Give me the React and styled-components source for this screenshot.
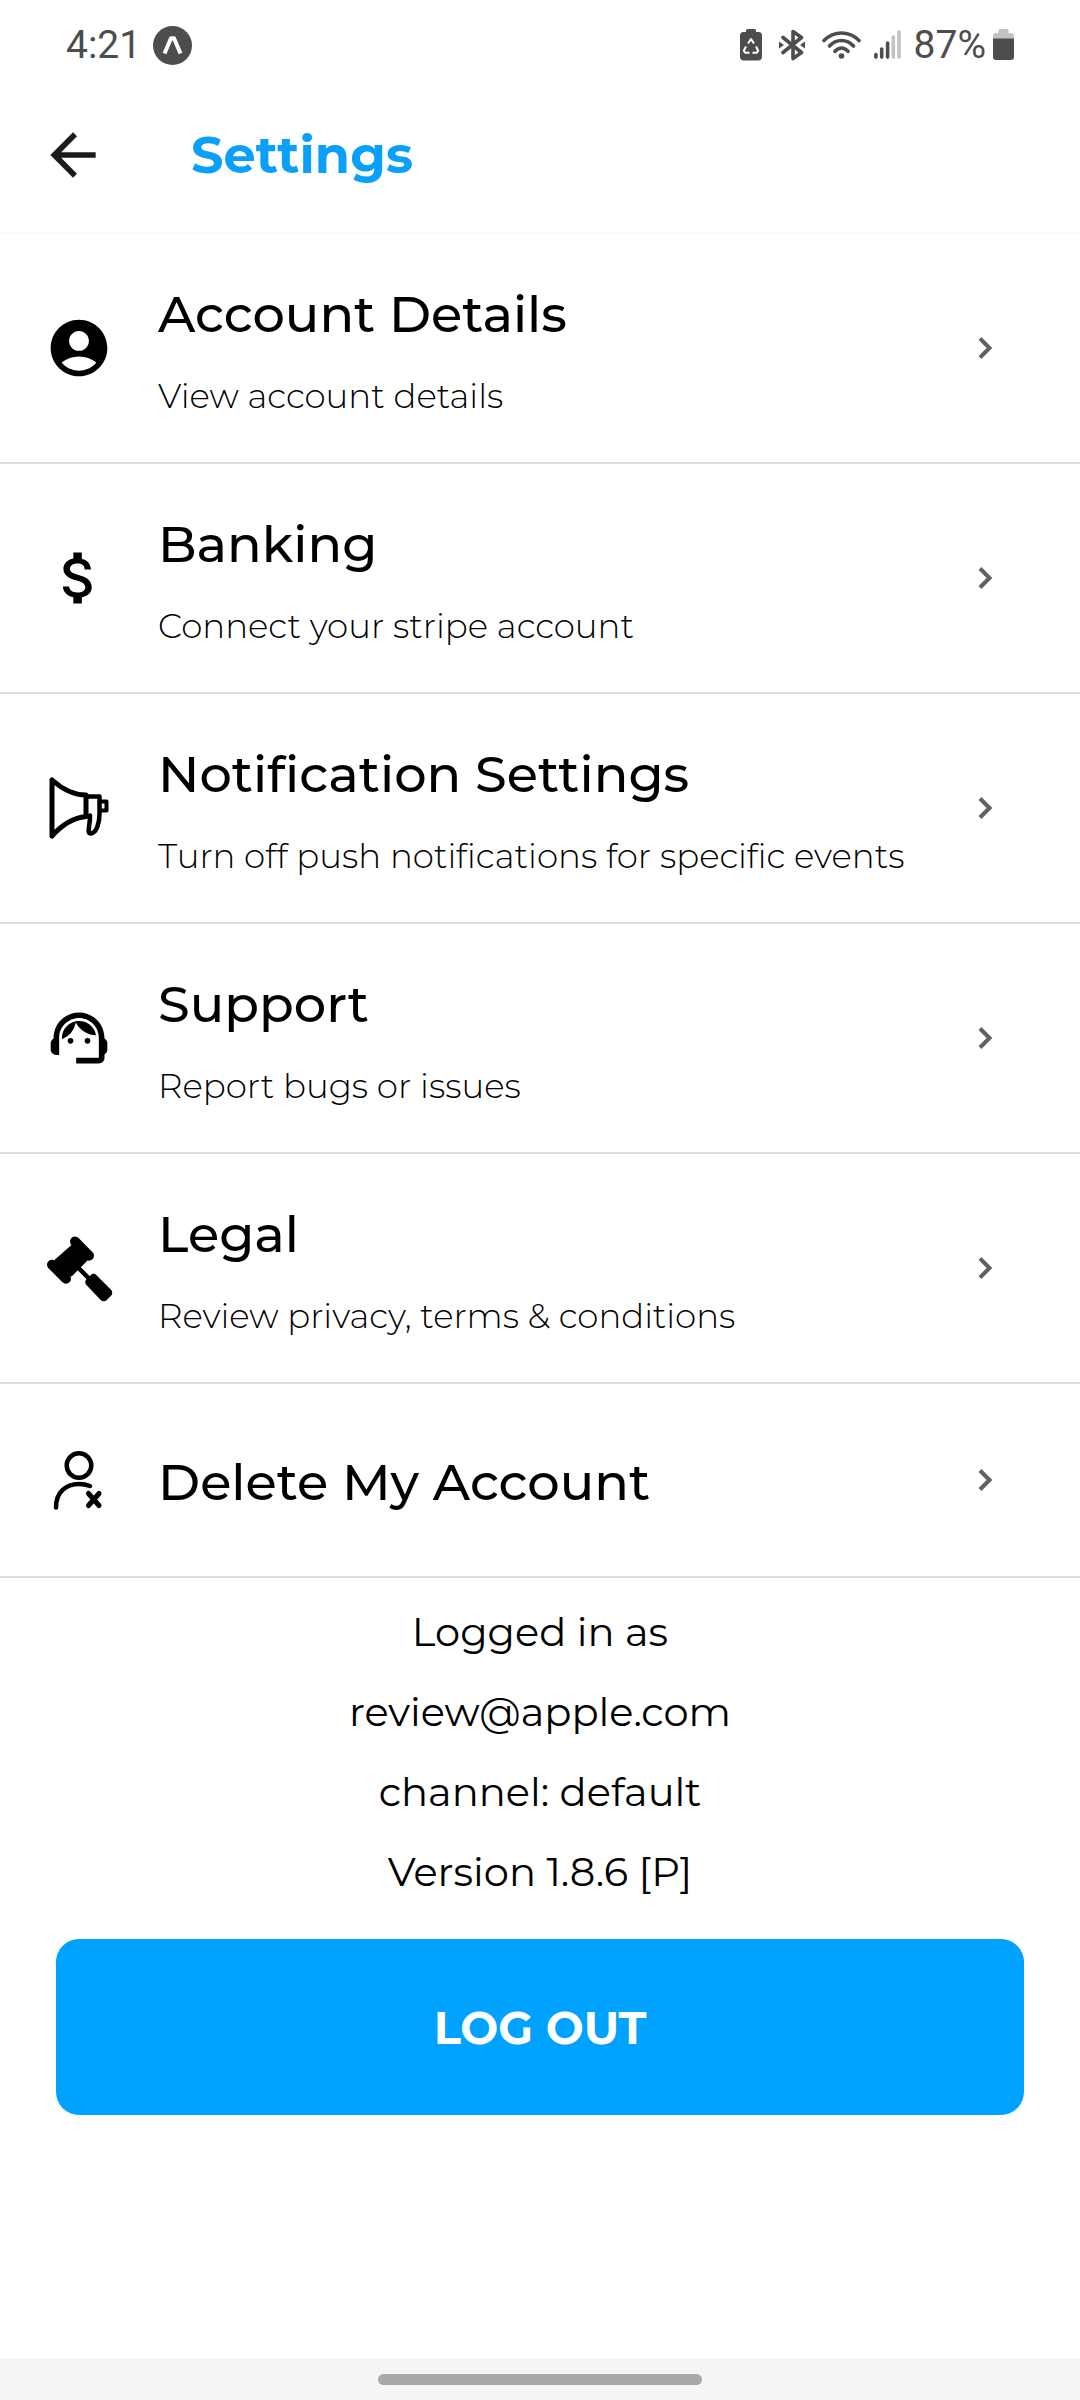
import React from 'react';
import styled, { createGlobalStyle } from 'styled-components';
import {
  MdAccountCircle,
  MdArrowBack,
  MdAttachMoney,
  MdSupportAgent
} from 'react-icons/md';

const GlobalStyle = createGlobalStyle`
  * {
    box-sizing: border-box;
  }

  body {
    margin: 0;
    background-color: white;
    color: black;
    font-family: Montserrat, Inter, 'Open Sans', sans-serif;
  }
`;

const Screen = styled.div`
  min-height: 100vh;
  display: flex;
  flex-direction: column;
`;

const StatusBar = styled.div`
  height: 90px;
  padding: 0 66px;
  display: flex;
  align-items: center;
  justify-content: space-between;
  color: #4d4d4d;
  font-family: Roboto, sans-serif;
  font-size: 39px;
`;

const StatusGroup = styled.div`
  display: flex;
  align-items: center;
  gap: ${props => props.$gap};

  svg {
    display: block;
    flex: none;
  }
`;

const Header = styled.header`
  height: 144px;
  padding: 0 39px 13px;
  display: flex;
  align-items: center;
  gap: 84px;
  border-bottom: 2px solid #fafafa;
`;

const BackButton = styled.button`
  width: 68px;
  height: 68px;
  padding: 0;
  border: none;
  background: none;
  color: #1c1c1c;
  cursor: pointer;
`;

const PageTitle = styled.h1`
  margin: 0;
  font-size: 51px;
  font-weight: 700;
  line-height: 64px;
  color: #0aa0fa;
`;

const MenuRow = styled.a`
  height: ${props => (props.$single ? '194px' : '230px')};
  padding: 0 83px 0 45px;
  display: flex;
  align-items: center;
  border-bottom: 2px solid #dcdcdc;
  color: black;
  text-decoration: none;

  > svg {
    flex: none;
    overflow: visible;
  }
`;

const RowText = styled.div`
  flex: 1;
  padding-top: 3px;
  padding-left: 45px;
  display: flex;
  flex-direction: column;
  gap: 28px;
`;

const RowTitle = styled.span`
  font-size: 51px;
  font-weight: 500;
  line-height: 64px;
`;

const RowSubtitle = styled.span`
  font-size: 34px;
  font-weight: 300;
  line-height: 44px;
`;

const Info = styled.div`
  padding: 14px 56px 27px;
  text-align: center;

  p {
    margin: 0;
    font-size: 40px;
    font-weight: 400;
    line-height: 80px;
  }
`;

const LogoutButton = styled.button`
  height: 176px;
  margin: 0 56px;
  border: none;
  border-radius: 23px;
  background-color: #00a2ff;
  color: white;
  font-family: inherit;
  font-size: 45px;
  font-weight: 700;
  cursor: pointer;
`;

const NavBar = styled.div`
  height: 42px;
  margin-top: auto;
  display: flex;
  align-items: center;
  justify-content: center;
  background-color: #f5f5f5;
`;

const NavHandle = styled.div`
  width: 30%;
  height: 11px;
  border-radius: 6px;
  background-color: #a9a9a9;
`;

const ExpoBadge = () => (
  <svg width="39" height="39" viewBox="0 0 39 39">
    <circle cx="19.5" cy="19.5" r="19.5" fill="#4d4d4d" />
    <path d="M11.5 27.5 18 12.2h3l6.5 15.3" fill="none" stroke="white" strokeWidth="4" strokeLinejoin="round" />
  </svg>
);

const BatterySaver = () => (
  <svg width="22" height="32" viewBox="0 0 22 32">
    <path d="M6 3V1.5Q6 0 7.5 0h7Q16 0 16 1.5V3h2.5Q22 3 22 6.5v21q0 4-4 4H4q-4 0-4-4v-21Q0 3 3.5 3z" fill="#4d4d4d" />
    <path d="M8 14.5 11 10l3 4.5M16 17.5l2.2 4.2-1.4 2h-4.3M9.5 23.7H5.2l-1.4-2L6 17.5" fill="none" stroke="white" strokeWidth="2" strokeLinejoin="round" />
    <path d="m11 13.500 4 7.500H7z" fill="#4d4d4d" />
  </svg>
);

const Bluetooth = () => (
  <svg width="26" height="32" viewBox="0 0 26 32">
    <path d="M4 8.5 22.5 23.5 14 29.500V2.500L22.500 8.500 4 23.500" fill="none" stroke="#4d4d4d" strokeWidth="3.6" strokeLinecap="round" strokeLinejoin="round" />
    <path d="M0 12.5 5 16l-5 3.5zM26 12.5 21 16l5 3.5z" fill="#4d4d4d" />
  </svg>
);

const Wifi = () => (
  <svg width="39" height="28" viewBox="0 0 39 28">
    <g fill="none" stroke="#4d4d4d" strokeWidth="3.6" strokeLinecap="round">
      <path d="M2 9.5Q9.5 2 19.5 2T37 9.5" />
      <path d="M7.5 15Q12.5 9.5 19.5 9.5T31.5 15" />
      <path d="M13 20.3Q16 17 19.5 17t6.5 3.3" />
    </g>
    <circle cx="19.5" cy="25" r="2.8" fill="#4d4d4d" />
  </svg>
);

const Signal = () => (
  <svg width="27" height="30" viewBox="0 0 27 30">
    <g stroke="#4d4d4d" strokeWidth="3.6" strokeLinecap="round">
      <path d="M1.9 24.5v2.6M7.7 19v8.1M13.6 13v14.1" />
      <path d="M19.3 7v20.1M25 2v25.1" stroke="#c2c2c2" />
    </g>
  </svg>
);

const Battery = () => (
  <svg width="21" height="32" viewBox="0 0 21 32">
    <path d="M5.5 4V1.5Q5.5 0 7 0h7q1.5 0 1.5 1.5V4H18q3 0 3 3v3H0V7q0-3 3-3z" fill="#c2c2c2" />
    <path d="M0 9.5h21V28q0 3-3 3H3q-3 0-3-3z" fill="#4d4d4d" />
  </svg>
);

const Megaphone = () => (
  <svg width="68" height="68" viewBox="0 0 68 68" fill="none" stroke="black" strokeWidth="5" strokeLinecap="round" strokeLinejoin="round">
    <path d="M7 6v56M7 6c9 8 20 15 34 15M7 62c8-9 19-18 34-19.5M41 21v21.5" />
    <path d="M41 22.5h13.5V40c0 9-3 19-8.5 19.5-5 0-.5-9-1-18" strokeWidth="4.5" />
    <path d="M56 27.500h5.500v9H56" strokeWidth="4" />
  </svg>
);

const Gavel = () => (
  <svg width="68" height="68" viewBox="0 0 68 68" stroke="black" strokeLinecap="round" strokeLinejoin="round">
    <path d="M28 11.5 41 26 26 41 11 26.5z" strokeWidth="3" />
    <path d="M30 7.5 44 21.7M7 30.7l14 14" strokeWidth="10" />
    <path d="m32 32.5 12 12" strokeWidth="4.5" />
    <path d="m44.5 48 4-3.7 14.5 14.5-4.2 4.2z" strokeWidth="8.5" />
  </svg>
);

const UserRemove = () => (
  <svg width="68" height="68" viewBox="0 0 68 68" fill="none" stroke="black" strokeWidth="4.5" strokeLinecap="round">
    <circle cx="34" cy="19.5" r="12.3" />
    <path d="M11 61.5C11 46 21 38 34 38c4.5 0 8 .8 11 2" />
    <path d="m43.5 47.5 10.5 12M54 47.5l-10.5 12" strokeWidth="5" />
  </svg>
);

const Chevron = () => (
  <svg width="24" height="24" viewBox="0 0 24 24" fill="none" stroke="#616161" strokeWidth="4">
    <path d="m7 2.5 9.5 9.5L7 21.5" />
  </svg>
);

const sections = [
  {
    id: 'account',
    title: 'Account Details',
    subtitle: 'View account details',
    icon: <MdAccountCircle size={68} />
  },
  {
    id: 'banking',
    title: 'Banking',
    subtitle: 'Connect your stripe account',
    icon: <MdAttachMoney size={68} />
  },
  {
    id: 'notifications',
    title: 'Notification Settings',
    subtitle: 'Turn off push notifications for specific events',
    icon: <Megaphone />
  },
  {
    id: 'support',
    title: 'Support',
    subtitle: 'Report bugs or issues',
    icon: <MdSupportAgent size={68} />
  },
  {
    id: 'legal',
    title: 'Legal',
    subtitle: 'Review privacy, terms & conditions',
    icon: <Gavel />
  },
  {
    id: 'delete',
    title: 'Delete My Account',
    icon: <UserRemove />
  }
];

const App = () => {
  return (
    <Screen>
      <GlobalStyle />
      <StatusBar>
        <StatusGroup $gap="12px">
          <span>4:21</span>
          <ExpoBadge />
        </StatusGroup>
        <StatusGroup $gap="17px">
          <BatterySaver />
          <Bluetooth />
          <StatusGroup $gap="13px">
            <Wifi />
            <Signal />
            <StatusGroup $gap="7px">
              <span>87%</span>
              <Battery />
            </StatusGroup>
          </StatusGroup>
        </StatusGroup>
      </StatusBar>
      <Header>
        <BackButton aria-label="Back">
          <MdArrowBack size={68} />
        </BackButton>
        <PageTitle>Settings</PageTitle>
      </Header>
      <nav>
        {sections.map(({ id, title, subtitle, icon }) => (
          <MenuRow key={id} href={`#${id}`} $single={!subtitle}>
            {icon}
            <RowText>
              <RowTitle>{title}</RowTitle>
              {subtitle && <RowSubtitle>{subtitle}</RowSubtitle>}
            </RowText>
            <Chevron />
          </MenuRow>
        ))}
      </nav>
      <Info>
        <p>Logged in as</p>
        <p>review@apple.com</p>
        <p>channel: default</p>
        <p>Version 1.8.6 [P]</p>
      </Info>
      <LogoutButton>LOG OUT</LogoutButton>
      <NavBar>
        <NavHandle />
      </NavBar>
    </Screen>
  );
};

export default App;
